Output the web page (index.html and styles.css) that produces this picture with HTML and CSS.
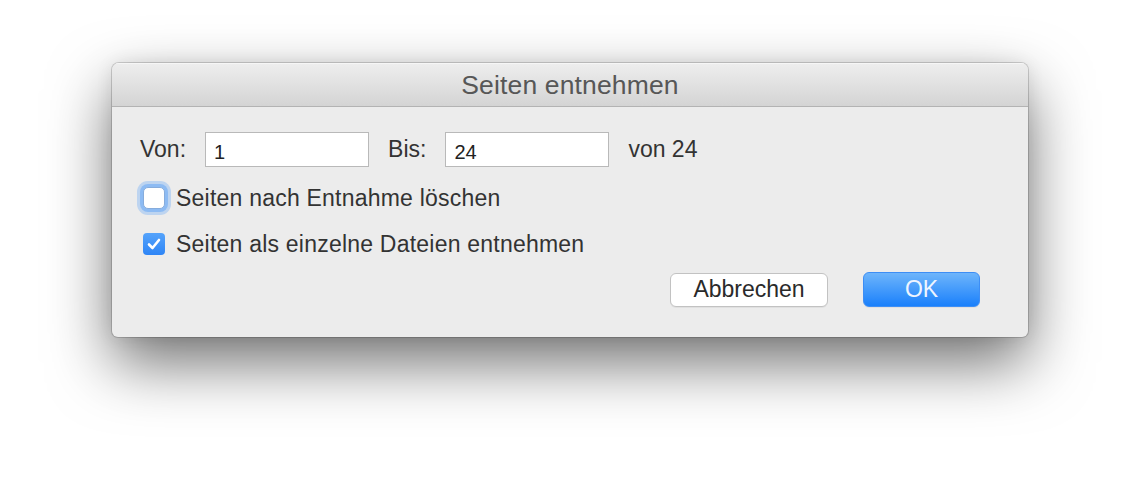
FILE: index.html
```html
<!DOCTYPE html>
<html lang="de">
<head>
    <meta charset="UTF-8">
    <meta name="viewport" content="width=device-width, initial-scale=1.0">
    <title>Seiten entnehmen</title>
    <link rel="stylesheet" href="styles.css">
</head>
<body>
    <div class="dialog">
        <div class="titlebar">Seiten entnehmen</div>
        <div class="content">
            <div class="range-row">
                <span class="label">Von:</span>
                <div class="field">1</div>
                <span class="label">Bis:</span>
                <div class="field">24</div>
                <span class="label">von 24</span>
            </div>
            <div class="check-row first">
                <span class="box focused"></span>
                <span class="check-label">Seiten nach Entnahme löschen</span>
            </div>
            <div class="check-row second">
                <span class="box checked">
                    <svg width="22" height="22" viewBox="0 0 22 22">
                        <path d="M6 11.5 L9.5 15 L16 7" fill="none" stroke="#fff" stroke-width="2.6" stroke-linecap="round" stroke-linejoin="round"/>
                    </svg>
                </span>
                <span class="check-label">Seiten als einzelne Dateien entnehmen</span>
            </div>
            <div class="buttons">
                <button class="btn">Abbrechen</button>
                <button class="btn primary">OK</button>
            </div>
        </div>
    </div>
</body>
</html>
```

FILE: styles.css
```css
body {
    margin: 0;
    background: #fff;
    font-family: "Liberation Sans", Arial, sans-serif;
    color: #333;
    height: 498px;
    overflow: hidden;
}
.dialog {
    margin: 63px 0 0 112px;
    width: 916px;
    height: 274px;
    background: #ececec;
    border-radius: 7px 7px 6px 6px;
    box-shadow: 0 0 0 1px rgba(0, 0, 0, 0.16), 0 26px 62px rgba(0, 0, 0, 0.56), 0 0 18px rgba(0, 0, 0, 0.08);
    overflow: hidden;
}
.titlebar {
    height: 43px;
    border-bottom: 1px solid #b3b3b3;
    background: linear-gradient(#eeeeee, #d4d4d4);
    box-shadow: inset 0 1px 0 #f6f6f6;
    text-align: center;
    font-size: 26.5px;
    letter-spacing: 0.15px;
    line-height: 45px;
    color: #575757;
}
.content {
    padding: 25px 48px 30px 28px;
}
.range-row {
    display: flex;
    align-items: center;
    height: 35px;
    gap: 19px;
    font-size: 23px;
}
.field {
    box-sizing: border-box;
    width: 164px;
    height: 35px;
    background: #fff;
    border: 1px solid #b9b9b9;
    font-size: 20px;
    line-height: 20px;
    padding: 9px 0 0 8px;
    color: #222;
}
.check-row {
    display: flex;
    align-items: center;
    height: 22px;
    padding-left: 3px;
    font-size: 23px;
    letter-spacing: 0.22px;
}
.check-row.first {
    margin-top: 20px;
}
.check-row.second {
    margin-top: 24px;
}
.box {
    box-sizing: border-box;
    width: 22px;
    height: 22px;
    border-radius: 5px;
    margin-right: 11px;
    flex-shrink: 0;
}
.box.focused {
    background: #fff;
    border: 1px solid #86acdc;
    box-shadow: 0 0 0 3px #8dbbf3, 0 0 0 6px rgba(141, 187, 243, 0.5);
}
.box.checked {
    background: linear-gradient(#55a3fb, #2e85f6);
    border-radius: 4px;
}
.box svg {
    display: block;
}
.buttons {
    display: flex;
    justify-content: flex-end;
    align-items: center;
    gap: 35px;
    margin-top: 17px;
}
.btn {
    box-sizing: border-box;
    font-family: "Liberation Sans", Arial, sans-serif;
    font-size: 23px;
    padding: 0;
    border-radius: 6px;
    cursor: pointer;
}
.btn {
    width: 158px;
    height: 34px;
    background: #fff;
    border: 1px solid #c2c2c2;
    color: #2a2a2a;
    box-shadow: 0 1px 0 rgba(0, 0, 0, 0.05);
}
.btn.primary {
    width: 117px;
    height: 35px;
    background: linear-gradient(#6eb5fb, #1a80fb);
    border: 1px solid #3d8ef5;
    color: #eef5ff;
}
```
